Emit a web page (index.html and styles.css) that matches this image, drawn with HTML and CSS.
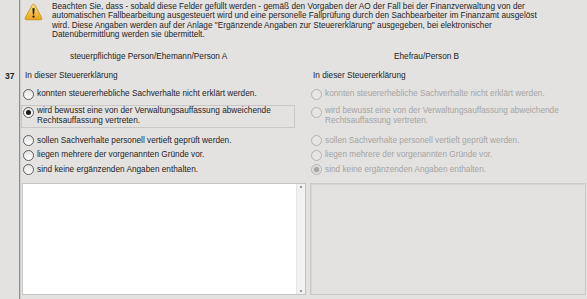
FILE: index.html
```html
<!DOCTYPE html>
<html>
<head>
<meta charset="utf-8">
<link rel="stylesheet" href="styles.css">
</head>
<body>
	<div class="form">
		<!-- Hinweis -->
		<div class="gutter"></div>
		<div class="notice">
			<svg class="warn" width="19" height="18" viewBox="0 0 19 18">
				<defs>
					<linearGradient id="wg" x1="0" y1="0" x2="0" y2="1">
						<stop offset="0" stop-color="#fde37a"/>
						<stop offset="1" stop-color="#eaa21a"/>
					</linearGradient>
				</defs>
				<path d="M9.5 1.2 C10.2 1.2 10.6 1.6 11 2.3 L17.8 14.8 C18.3 15.8 17.8 16.8 16.7 16.8 L2.3 16.8 C1.2 16.8 0.7 15.8 1.2 14.8 L8 2.3 C8.4 1.6 8.8 1.2 9.5 1.2 Z" fill="url(#wg)" stroke="#c88a14" stroke-width="0.8"/>
				<path d="M8.4 5.2 L10.6 5.2 L10.1 11.4 L8.9 11.4 Z" fill="#1a1a1a"/>
				<circle cx="9.5" cy="13.6" r="1.15" fill="#1a1a1a"/>
			</svg>
			<p class="msg">Beachten Sie, dass - sobald diese Felder gefüllt werden - gemäß den Vorgaben der AO der Fall bei der Finanzverwaltung von der<br>automatischen Fallbearbeitung ausgesteuert wird und eine personelle Fallprüfung durch den Sachbearbeiter im Finanzamt ausgelöst<br>wird. Diese Angaben werden auf der Anlage "Ergänzende Angaben zur Steuererklärung" ausgegeben, bei elektronischer<br>Datenübermittlung werden sie übermittelt.</p>
		</div>

		<!-- Spaltenköpfe -->
		<div class="gutter"></div>
		<div class="cols heads">
			<div class="head-a">steuerpflichtige Person/Ehemann/Person A</div>
			<div class="head-b">Ehefrau/Person B</div>
		</div>

		<!-- Zeile 37 -->
		<div class="gutter num">37</div>
		<div class="cols">
			<div class="col">
				<div class="q">In dieser Steuererklärung</div>
				<div class="opt"><span class="radio"></span><span>konnten steuererhebliche Sachverhalte nicht erklärt werden.</span></div>
				<div class="opt focus"><span class="radio on"></span><span>wird bewusst eine von der Verwaltungsauffassung abweichende<br>Rechtsauffassung vertreten.</span></div>
				<div class="opt"><span class="radio"></span><span>sollen Sachverhalte personell vertieft geprüft werden.</span></div>
				<div class="opt"><span class="radio"></span><span>liegen mehrere der vorgenannten Gründe vor.</span></div>
				<div class="opt"><span class="radio"></span><span>sind keine ergänzenden Angaben enthalten.</span></div>
				<div class="memo">
					<div class="memo-text"></div>
					<div class="scroll"><span class="up"></span><span class="down"></span></div>
				</div>
			</div>
			<div class="col off">
				<div class="q">In dieser Steuererklärung</div>
				<div class="opt"><span class="radio"></span><span>konnten steuererhebliche Sachverhalte nicht erklärt werden.</span></div>
				<div class="opt plain"><span class="radio"></span><span>wird bewusst eine von der Verwaltungsauffassung abweichende<br>Rechtsauffassung vertreten.</span></div>
				<div class="opt"><span class="radio"></span><span>sollen Sachverhalte personell vertieft geprüft werden.</span></div>
				<div class="opt"><span class="radio"></span><span>liegen mehrere der vorgenannten Gründe vor.</span></div>
				<div class="opt"><span class="radio on"></span><span>sind keine ergänzenden Angaben enthalten.</span></div>
				<div class="memo memo-off"></div>
			</div>
		</div>
	</div>
</body>
</html>
```

FILE: styles.css
```css
	html, body {
		margin: 0;
		padding: 0;
	}
	* {
		box-sizing: border-box;
	}
	body {
		width: 587px;
		height: 299px;
		overflow: hidden;
		background-color: #e3e2e1;
		font-family: "Liberation Sans", Arial, sans-serif;
		font-size: 8.25px;
		color: #1e1e1e;
	}
	.form {
		display: grid;
		grid-template-columns: 20px 1fr;
		grid-template-rows: 49px 17px 1fr;
		height: 299px;
	}
	.gutter {
		border-right: 1px solid #8d8d8d;
		box-shadow: 1px 0 0 #cfcecd;
	}
	.num {
		font-weight: bold;
		font-size: 8.5px;
		padding: 5px 0 0 5px;
		line-height: 10px;
	}

	/* Hinweis */
	.notice {
		display: flex;
		align-items: flex-start;
		padding: 2px 0 0 4px;
	}
	.warn {
		flex: none;
		margin-top: 1px;
	}
	.msg {
		margin: 0 0 0 9px;
		line-height: 9.4px;
		white-space: nowrap;
	}

	/* Spalten */
	.cols {
		display: grid;
		grid-template-columns: 284px 1fr;
		column-gap: 4px;
		padding-left: 2px;
	}
	.heads {
		line-height: 10px;
		padding-top: 3px;
	}
	.head-a {
		padding-left: 48px;
	}
	.head-b {
		padding-left: 84px;
	}
	.col {
		display: flex;
		flex-direction: column;
		padding-top: 5px;
	}
	.q {
		padding-left: 3px;
		line-height: 10px;
		margin-bottom: 6px;
	}
	.opt {
		display: flex;
		align-items: center;
		gap: 3px;
		height: 14.5px;
		padding: 0;
		line-height: 12.5px;
		margin-right: 11px;
		border: 1px solid transparent;
	}
	.opt.focus,
	.opt.plain {
		align-items: flex-start;
		height: 23px;
		line-height: 10px;
		margin: 3px 11px 6px -1px;
		padding: 0.5px 0 0 1px;
	}
	.opt.focus .radio,
	.opt.plain .radio {
		margin-top: 0.5px;
	}
	.opt.focus {
		border-color: #c9c8c6;
	}
	.radio {
		flex: none;
		width: 11px;
		height: 11px;
		border: 1px solid #5e5e5e;
		border-radius: 50%;
		background: linear-gradient(#e2e2e2, #ffffff);
		position: relative;
	}
	.radio.on::after {
		content: "";
		position: absolute;
		left: 2px;
		top: 2px;
		width: 5px;
		height: 5px;
		border-radius: 50%;
		background: #1a1a1a;
	}
	.off .opt {
		color: #a4a4a3;
	}
	.off .radio {
		border-color: #b3b3b2;
		background: #e6e5e4;
	}
	.off .radio.on::after {
		background: #a6a6a5;
		box-shadow: 0 0 0 1px #d0d0cf;
	}

	/* Textfelder */
	.memo {
		margin-top: 6px;
		height: 112px;
		border: 1px solid #c4c3c2;
		display: flex;
	}
	.memo-text {
		flex: 1;
		background: #ffffff;
	}
	.scroll {
		width: 9px;
		background: #f1f1f0;
		border-left: 1px solid #e6e6e6;
		display: flex;
		flex-direction: column;
		justify-content: space-between;
		align-items: center;
		padding: 2px 0;
	}
	.scroll span {
		width: 2px;
		height: 2px;
		background: #9a9a9a;
	}
	.memo-off {
		background: #e3e2e1;
		border-color: #cbcac9;
		box-shadow: inset 1px 1px 0 #d6d5d4;
		margin-right: 1px;
	}
```
